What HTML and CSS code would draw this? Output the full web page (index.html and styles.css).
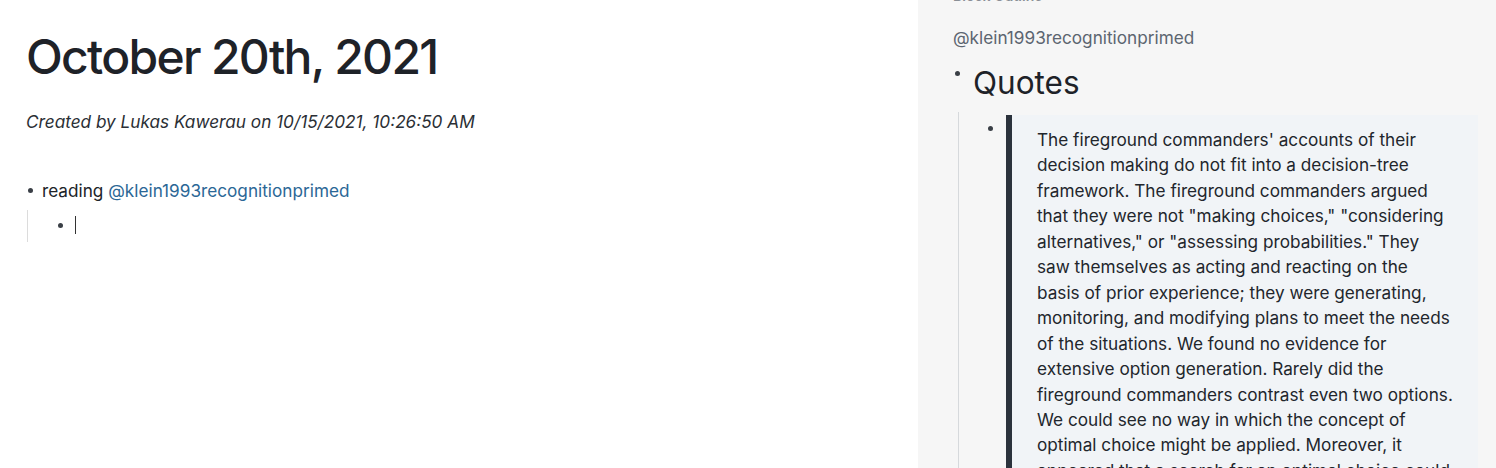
FILE: index.html
```html
<!DOCTYPE html>
<html>
<head>
<meta charset="utf-8">
<link rel="stylesheet" href="styles.css">
</head>
<body>
<div class="app">
  <main class="page">
    <h1 class="title">October 20th, 2021</h1>
    <p class="meta">Created by Lukas Kawerau on 10/15/2021, 10:26:50 AM</p>
    <ul class="blocks">
      <li class="block">
        <div class="row"><span class="dot"></span><span class="text">reading <a class="ref">@klein1993recognitionprimed</a></span></div>
        <ul class="children">
          <li class="block">
            <div class="row"><span class="dot"></span><span class="caret"></span></div>
          </li>
        </ul>
      </li>
    </ul>
  </main>
  <aside class="side">
    <div class="side-head">Block Outline</div>
    <div class="side-ref">@klein1993recognitionprimed</div>
    <div class="heading-row"><span class="dot small"></span><span class="heading">Quotes</span></div>
    <div class="side-children">
      <div class="quote-row">
        <span class="dot"></span>
        <blockquote class="quote">The fireground commanders' accounts of their decision making do not fit into a decision-tree framework. The fireground commanders argued that they were not "making choices," "considering alternatives," or "assessing probabilities." They saw&nbsp;themselves as acting and reacting on the basis of prior experience; they were generating, monitoring, and modifying plans to meet the needs of the situations. We found no evidence for extensive option generation. Rarely did the fireground commanders contrast even two options. We could see no way in which the concept of optimal choice might be applied. Moreover, it appeared that a search for an optimal choice could stall the fireground commanders long enough to lose control of the operation altogether.</blockquote>
      </div>
    </div>
  </aside>
</div>
</body>
</html>
```
FILE: styles.css
```css
html, body {
  margin: 0;
  padding: 0;
  background: #ffffff;
  font-family: Inter, "Noto Sans", sans-serif;
  color: #202328;
  overflow: hidden;
  height: 468px;
}
.app {
  display: flex;
  height: 468px;
}
.page {
  flex: 1;
  padding: 28px 0 0 26px;
  min-width: 0;
}
.title {
  margin: 0;
  font-size: 48px;
  font-weight: 500;
  line-height: 58px;
  color: #1e2228;
  letter-spacing: -1.7px;
}
.meta {
  margin: 24px 0 0 0;
  font-size: 17.2px;
  font-style: italic;
  line-height: 24px;
  color: #2b2f35;
}
.blocks, .children {
  list-style: none;
  margin: 0;
  padding: 0;
}
.blocks {
  margin-top: 43px;
}
.row {
  display: flex;
  align-items: center;
  height: 26px;
  font-size: 17.2px;
  color: #202328;
}
.dot {
  width: 5px;
  height: 5px;
  border-radius: 50%;
  background: #3a3f46;
  flex: none;
  margin: 0 9px 0 2px;
}
.ref {
  color: #2b6796;
  text-decoration: none;
}
.children {
  margin: 7px 0 0 1px;
  border-left: 1px solid #dcdcdc;
  padding: 2px 0 4px 28px;
}
.caret {
  width: 1px;
  height: 18px;
  background: #333;
  margin-left: 3px;
}
.side {
  width: 578px;
  flex: none;
  background: #f6f6f6;
  padding: 0 18px 0 35px;
  box-sizing: border-box;
}
.side-head {
  margin-top: -14px;
  font-size: 14px;
  font-weight: 600;
  color: #8a8f96;
  height: 20px;
  line-height: 20px;
}
.side-ref {
  margin-top: 20px;
  font-size: 17.2px;
  line-height: 24px;
  color: #5c6570;
}
.heading-row {
  display: flex;
  align-items: flex-start;
  margin: 12px 0 8px 0;
}
.dot.small {
  margin: 9px 13px 0 2px;
}
.heading {
  font-size: 31.5px;
  line-height: 42px;
  color: #1e2228;
}
.side-children {
  margin-left: 5px;
  border-left: 1px solid #d6d9dc;
  padding: 3px 0 0 29px;
}
.quote-row {
  display: flex;
  align-items: flex-start;
}
.quote-row .dot {
  margin: 11px 13px 0 0;
}
.quote {
  margin: 0;
  background: #f1f4f7;
  border-left: 6px solid #2b323c;
  padding: 12px 24px 0 25px;
  font-size: 17.2px;
  line-height: 25.45px;
  color: #22262c;
  flex: 1;
}
```
